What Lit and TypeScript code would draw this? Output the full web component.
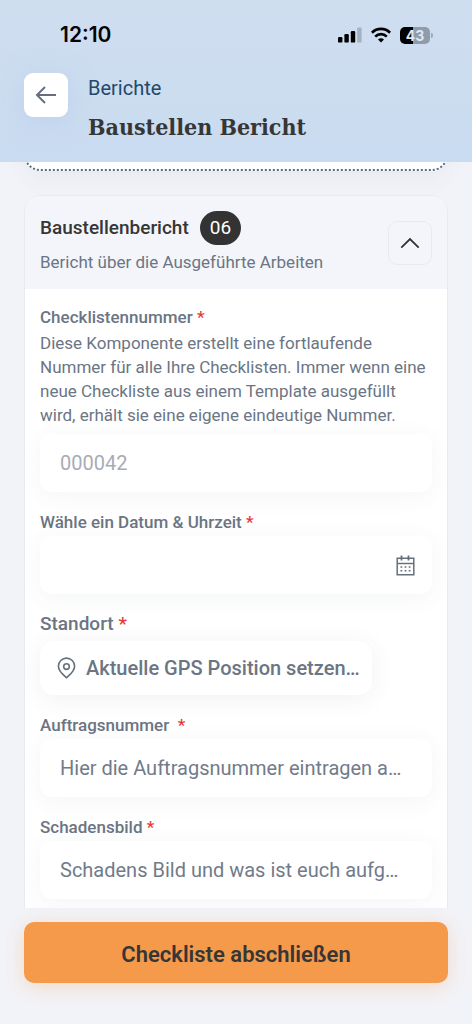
import { LitElement, html, css, svg } from "lit";
import { customElement, property } from "lit/decorators.js";

@customElement("status-bar")
class StatusBar extends LitElement {
  static styles = css`
    :host {
      display: flex;
      align-items: center;
      justify-content: space-between;
      height: 24px;
      padding: 0 39px 0 60px;
      color: #050505;
      font-family: Inter, sans-serif;
    }
    .time {
      font-size: 21px;
      line-height: 24px;
      font-weight: 600;
    }
    .indicators {
      display: flex;
      align-items: center;
      gap: 9px;
    }
    .battery {
      display: flex;
      align-items: center;
      gap: 1px;
    }
    .level {
      width: 30px;
      height: 17px;
      border-radius: 5px;
      background: linear-gradient(90deg, #000 43%, #8f9cab 43%);
      color: #dfe8f3;
      font-size: 14px;
      line-height: 17px;
      font-weight: 700;
      text-align: center;
    }
    .cap {
      width: 2px;
      height: 5px;
      border-radius: 0 2px 2px 0;
      background: #9aa8b8;
    }
  `;
  render() {
    return html`
      <span class="time">12:10</span>
      <div class="indicators">
        <svg width="24" height="16" viewBox="0 0 24 16" aria-hidden="true">
          <rect x="0" y="10" width="4.4" height="5.6" rx="1.2" />
          <rect x="6.4" y="7" width="4.4" height="8.6" rx="1.2" />
          <rect x="12.8" y="4" width="4.4" height="11.6" rx="1.2" />
          <rect x="19.2" y="0.5" width="4.4" height="15.1" rx="1.2" fill="#a3b1c1" />
        </svg>
        <svg width="20" height="16" viewBox="0 0 20 16" fill="none" stroke="#000" stroke-width="2.7" aria-hidden="true">
          <path d="M0.9 5.7C6 .6 14 .6 19.1 5.7" />
          <path d="M4.2 9.6C7.5 6.4 12.5 6.4 15.8 9.6" />
          <path d="M7 12.4C8.8 10.8 11.2 10.8 13 12.4L10 15.4Z" fill="#000" stroke="none" />
        </svg>
        <div class="battery"><span class="level">43</span><span class="cap"></span></div>
      </div>
    `;
  }
}

@customElement("field-label")
class FieldLabel extends LitElement {
  static styles = css`
    :host {
      display: inline;
    }
    .mark {
      color: #e53935;
    }
  `;
  render() {
    return html`<slot></slot> <span class="mark">*</span>`;
  }
}

const calendarIcon = svg`
  <g fill="none" stroke="#66707d" stroke-width="1.5">
    <path d="M1.2 2.8H17.8V19.2H1.2Z" />
    <path d="M1.2 8H17.8" />
    <path d="M5.5 0V5M12.5 0V5" stroke-width="1.8" />
  </g>
  <path d="M4.5 10.7h1.8v1.6h-1.8zM8.6 10.7h1.8v1.6h-1.8zM12.7 10.7h1.8v1.6h-1.8zM4.5 14.4h1.8v1.6h-1.8zM8.6 14.4h1.8v1.6h-1.8zM12.7 14.4h1.8v1.6h-1.8z" fill="#66707d" />
`;

@customElement("app-root")
class AppRoot extends LitElement {
  @property() reportTitle = "Baustellen Bericht";

  static styles = css`
    :host {
      display: flex;
      flex-direction: column;
      height: 100vh;
      background: #f2f3f8;
      color: #6b7583;
      font-family: Roboto, sans-serif;
      font-size: 17px;
      line-height: 24px;
    }
    * {
      box-sizing: border-box;
    }
    button,
    input {
      margin: 0;
      border: 0;
      font-family: inherit;
      color: inherit;
    }
    .top {
      flex: none;
      padding: 23px 0 20px;
      background: linear-gradient(#cfddef, #ccddef 55%, #c9dbf1);
    }
    .nav {
      display: flex;
      gap: 20px;
      padding: 26px 24px 0;
    }
    .back {
      display: flex;
      align-items: center;
      justify-content: center;
      width: 44px;
      height: 44px;
      padding: 0;
      border-radius: 9px;
      background: #fff;
      box-shadow: 0 4px 24px rgba(180, 200, 240, 0.5);
    }
    .titles {
      display: flex;
      flex-direction: column;
      gap: 12px;
      padding-top: 3px;
    }
    .crumb {
      color: #24486c;
      font-size: 20px;
      line-height: 24px;
      text-decoration: none;
    }
    h1 {
      margin: 0;
      color: #363636;
      font-family: "Roboto Slab", "DejaVu Serif Condensed", "DejaVu Serif", serif;
      font-size: 23px;
      line-height: 30px;
      font-weight: 700;
    }
    main {
      flex: 1;
      min-height: 0;
      overflow: hidden;
      padding: 0 24px;
    }
    .previous {
      height: 48px;
      margin-top: -39px;
      border: 2px dotted #4f6d8b;
      border-radius: 16px;
      background: #fff;
      box-shadow: 0 8px 24px rgba(60, 70, 90, 0.05);
    }
    .card {
      margin-top: 24px;
      border: 1px solid #e8eaef;
      border-radius: 16px;
      background: #fff;
      overflow: hidden;
    }
    .card-head {
      display: flex;
      align-items: center;
      justify-content: space-between;
      padding: 15px;
      background: #f4f5fa;
    }
    .card-title {
      display: flex;
      align-items: center;
      gap: 11px;
      color: #363636;
    }
    h2 {
      margin: 0;
      font-size: 19px;
      line-height: 24px;
      font-weight: 500;
    }
    .badge {
      padding: 0 10px;
      border-radius: 17px;
      background: #333;
      color: #fff;
      font-size: 19px;
      line-height: 34px;
    }
    .subtitle {
      margin: 5px 0 0;
    }
    .toggle {
      display: flex;
      align-items: center;
      justify-content: center;
      width: 44px;
      height: 44px;
      padding: 0;
      border: 1px solid #e8eaef;
      border-radius: 9px;
      background: #f4f5fa;
    }
    form {
      display: flex;
      flex-direction: column;
      gap: 18px;
      padding: 16px 15px 32px;
    }
    .field {
      display: flex;
      flex-direction: column;
      gap: 2px;
    }
    .name {
      font-weight: 500;
    }
    .place {
      font-size: 19px;
    }
    .hint {
      margin: 0 0 5px;
    }
    .box {
      display: flex;
      align-items: center;
      height: 58px;
      padding: 0 16px 0 20px;
      border-radius: 12px;
      background: #fff;
      box-shadow: 0 4px 24px rgba(60, 80, 100, 0.06);
    }
    .box input {
      flex: 1;
      min-width: 0;
      height: 32px;
      padding: 0;
      background: none;
      outline: none;
      font-size: 20px;
    }
    .box input::placeholder {
      color: #717b89;
      opacity: 1;
    }
    .box input:disabled::placeholder {
      color: #a7acb4;
    }
    .pick {
      display: flex;
      padding: 0;
      background: none;
    }
    .locate {
      display: flex;
      align-items: center;
      align-self: flex-start;
      gap: 10px;
      height: 54px;
      margin-top: 3px;
      padding: 0 12px 0 17px;
      border-radius: 14px;
      background: #fff;
      box-shadow: 0 4px 24px rgba(60, 80, 100, 0.08);
      font-size: 20px;
      font-weight: 500;
    }
    footer {
      flex: none;
      padding: 14px 24px 41px;
    }
    .finish {
      width: 100%;
      height: 61px;
      padding: 4px 0 0;
      border-radius: 10px;
      background: #f49a4a;
      box-shadow: 0 4px 20px rgba(244, 154, 74, 0.28);
      color: #363636;
      font-size: 22px;
      font-weight: 600;
    }
  `;

  render() {
    return html`
      <header class="top">
        <status-bar></status-bar>
        <div class="nav">
          <button class="back" aria-label="Zurück">
            <svg width="22" height="18" viewBox="0 0 22 18" fill="none" stroke="#66707d" stroke-width="2">
              <path d="M21 9H2M10 1L2 9L10 17" />
            </svg>
          </button>
          <div class="titles">
            <a class="crumb" href="#">Berichte</a>
            <h1>${this.reportTitle}</h1>
          </div>
        </div>
      </header>
      <main>
        <div class="previous"></div>
        <section class="card">
          <div class="card-head">
            <div>
              <div class="card-title">
                <h2>Baustellenbericht</h2>
                <span class="badge">06</span>
              </div>
              <p class="subtitle">Bericht über die Ausgeführte Arbeiten</p>
            </div>
            <button class="toggle" aria-label="Abschnitt einklappen">
              <svg width="20" height="12" viewBox="0 0 20 12" fill="none" stroke="#333" stroke-width="1.8">
                <path d="M1.3 10.7L10 2L18.7 10.7" />
              </svg>
            </button>
          </div>
          <form>
            <div class="field">
              <label class="name" for="number"><field-label>Checklistennummer</field-label></label>
              <p class="hint">
                Diese Komponente erstellt eine fortlaufende Nummer für alle Ihre Checklisten. Immer wenn
                eine neue Checkliste aus einem Template ausgefüllt wird, erhält sie eine eigene eindeutige
                Nummer.
              </p>
              <div class="box"><input id="number" placeholder="000042" disabled /></div>
            </div>
            <div class="field">
              <label class="name" for="date"><field-label>Wähle ein Datum &amp; Uhrzeit</field-label></label>
              <div class="box">
                <input id="date" />
                <button class="pick" type="button" aria-label="Kalender öffnen">
                  <svg width="21" height="21" viewBox="-1 0 21 20">${calendarIcon}</svg>
                </button>
              </div>
            </div>
            <div class="field">
              <label class="name place" for="gps"><field-label>Standort</field-label></label>
              <button class="locate" id="gps" type="button">
                <svg width="19" height="22" viewBox="0 0 19 22" fill="none" stroke="#66707d" stroke-width="1.6">
                  <path d="M9.5 20.8C7.5 18.6 1.4 14.6 1.4 9.2A8.1 8.1 0 0 1 17.6 9.2C17.6 14.6 11.5 18.6 9.5 20.8Z" stroke-linejoin="round" />
                  <circle cx="9.5" cy="9.6" r="2.8" />
                </svg>
                <span>Aktuelle GPS Position setzen…</span>
              </button>
            </div>
            <div class="field">
              <label class="name" for="order"><field-label>Auftragsnummer&nbsp;</field-label></label>
              <div class="box"><input id="order" placeholder="Hier die Auftragsnummer eintragen a…" /></div>
            </div>
            <div class="field">
              <label class="name" for="damage"><field-label>Schadensbild</field-label></label>
              <div class="box"><input id="damage" placeholder="Schadens Bild und was ist euch aufg…" /></div>
            </div>
          </form>
        </section>
      </main>
      <footer><button class="finish" type="button">Checkliste abschließen</button></footer>
    `;
  }
}
